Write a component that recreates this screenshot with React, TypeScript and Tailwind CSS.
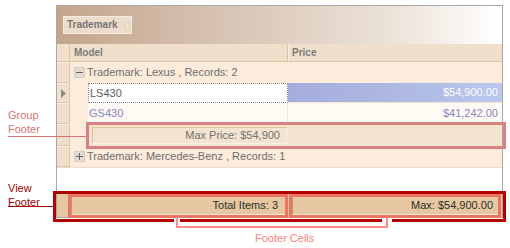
import { ReactNode } from 'react'

// indicator (row header) cell on the left of the grid
function Indicator({ children }: { children?: ReactNode }) {
  return (
    <div className="w-[13px] shrink-0 self-stretch bg-[#f0dfca] border-r border-b border-[#dfc6a6] border-t border-t-[#f8eee2] flex items-center justify-center">
      {children}
    </div>
  )
}

function ExpandBox({ sign }: { sign: '+' | '-' }) {
  return (
    <div className="w-[11px] h-[11px] bg-[#e2dbd3] border border-[#d6cdc3] flex items-center justify-center">
      <svg width="7" height="7" viewBox="0 0 7 7">
        <rect x="0" y="3" width="7" height="1" fill="#666" />
        {sign === '+' && <rect x="3" y="0" width="1" height="7" fill="#666" />}
      </svg>
    </div>
  )
}

export default function App() {
  return (
    <div className="relative w-[510px] h-[248px] bg-white overflow-hidden font-['Liberation_Sans',Arial,sans-serif] text-[11px] leading-none">
      {/* GRID */}
      <div className="ml-[56px] mt-[5px] w-[447px] border border-[#a8a8a8] flex flex-col">
        {/* group panel */}
        <div className="h-[38px] bg-[linear-gradient(90deg,#c4a58c_0%,#d9c6b6_40%,#ece2d8_75%,#ffffff_100%)] pl-[6px] pt-[10px]">
          <div className="inline-flex items-center gap-[6px] h-[18px] w-[69px] pl-[3px] bg-[#eddccb] border border-[#f5ebe0] text-[10px] font-bold text-[#767676]">
            Trademark
            <svg width="9" height="8" viewBox="0 0 9 8">
              <path d="M4.5 0.5 L8.5 7.5 L0.5 7.5 Z" fill="#f7ecd9" stroke="#e2c9a2" />
            </svg>
          </div>
        </div>

        {/* column headers */}
        <div className="h-[18px] flex bg-[#f0dfca] border-b border-[#dec4a3] text-[10px] font-bold text-[#7a7a7a]">
          <div className="w-[13px] shrink-0 border-r border-[#dec4a3]" />
          <div className="w-[218px] shrink-0 border-r border-[#dec4a3] flex items-center pl-[4px]">Model</div>
          <div className="flex-1 border-l border-[#f8efe4] flex items-center pl-[3px]">Price</div>
        </div>

        {/* group row: Lexus */}
        <div className="h-[21px] flex bg-[#fdebdc]">
          <Indicator />
          <div className="flex-1 flex items-center gap-[2px] pl-[4px] text-[#6e6e6e]">
            <ExpandBox sign="-" />
            Trademark: Lexus , Records: 2
          </div>
        </div>

        {/* data row: LS430 (focused) */}
        <div className="h-[20px] flex">
          <Indicator>
            <svg width="5" height="9" viewBox="0 0 5 9">
              <path d="M0 0 L5 4.5 L0 9 Z" fill="#8a8a8a" />
            </svg>
          </Indicator>
          <div className="w-[18px] shrink-0 bg-[#fdebdc]" />
          <div className="w-[200px] shrink-0 bg-white border border-dotted border-[#8a8a8a] flex items-center pl-[1px] text-[#5e5e5e]">
            LS430
          </div>
          <div className="flex-1 bg-[linear-gradient(90deg,#a6addc_0%,#aeb8e2_50%,#bac7ee_100%)] border-b border-[#f4e6d6] flex items-center justify-end pr-[4px] text-white">
            $54,900.00
          </div>
        </div>

        {/* data row: GS430 */}
        <div className="h-[21px] flex">
          <Indicator />
          <div className="w-[18px] shrink-0 bg-[#fdebdc]" />
          <div className="w-[200px] shrink-0 bg-[#fffaf3] border-r border-b border-[#f4e6d6] flex items-center pl-[1px] text-[#8585c2]">
            GS430
          </div>
          <div className="flex-1 bg-[#fffaf3] border-b border-[#f4e6d6] flex items-center justify-end pr-[4px] text-[#8585c2]">
            $41,242.00
          </div>
        </div>

        {/* group footer */}
        <div className="h-[22px] flex">
          <Indicator />
          <div className="w-[18px] shrink-0 bg-[#fdebdc]" />
          <div className="flex-1 bg-[#f3e3cf] flex items-center pl-[4px]">
            <div className="w-[195px] h-[17px] border-t border-l border-[#dfc4a1] border-b border-r border-b-[#faf2e8] border-r-[#faf2e8] flex items-center justify-end pr-[6px] text-[#727272]">
              Max Price: $54,900
            </div>
          </div>
        </div>

        {/* group row: Mercedes-Benz */}
        <div className="h-[22px] flex bg-[#fdebdc] border-b border-[#ecdcca]">
          <Indicator />
          <div className="flex-1 flex items-center gap-[2px] pl-[4px] text-[#6e6e6e]">
            <ExpandBox sign="+" />
            Trademark: Mercedes-Benz , Records: 1
          </div>
        </div>

        {/* empty area */}
        <div className="h-[26px] bg-white" />

        {/* view footer */}
        <div className="h-[23px] flex items-center bg-[#e5c8a1] pl-[14px] pr-[2px] gap-[5px] text-[#2e2e2e]">
          <div className="w-[216px] h-[19px] border-t border-l border-[#bf9b70] border-b border-r border-b-[#f7ead8] border-r-[#f7ead8] flex items-center justify-end pr-[8px]">
            Total Items: 3
          </div>
          <div className="flex-1 h-[19px] border-t border-l border-[#bf9b70] border-b border-r border-b-[#f7ead8] border-r-[#f7ead8] flex items-center justify-end pr-[6px]">
            Max: $54,900.00
          </div>
        </div>
      </div>

      {/* ANNOTATIONS */}
      {/* group footer */}
      <div className="absolute left-[8px] top-[108px] text-[#d97474] leading-[14px]">
        Group<br />Footer
      </div>
      <div className="absolute left-[8px] top-[136px] w-[80px] h-px bg-[#d97474]" />
      <div className="absolute left-[86px] top-[122px] w-[420px] h-[27px] border-[3px] border-[#d98080]" />

      {/* view footer */}
      <div className="absolute left-[8px] top-[181px] text-[#a30000] leading-[14px]">
        View<br />Footer
      </div>
      <div className="absolute left-[8px] top-[206px] w-[46px] h-px bg-[#a30000]" />
      <div className="absolute left-[53px] top-[191px] w-[453px] h-[28px] border-[3px] border-b-0 border-[#b00000]" />
      <div className="absolute left-[53px] top-[219px] w-[121px] h-[3px] bg-[#b00000]" />
      <div className="absolute left-[180px] top-[219px] w-[202px] h-[3px] bg-[#b00000]" />
      <div className="absolute left-[392px] top-[219px] w-[114px] h-[3px] bg-[#b00000]" />

      {/* footer cells */}
      <div className="absolute left-[68px] top-[194px] w-[220px] h-[24px] border-[3px] border-[#ee7462]" />
      <div className="absolute left-[289px] top-[194px] w-[212px] h-[24px] border-[3px] border-[#ee7462]" />
      <div className="absolute left-[176px] top-[217px] w-[2px] h-[11px] bg-[#ff8d8d]" />
      <div className="absolute left-[176px] top-[226px] w-[212px] h-[2px] bg-[#ff8d8d]" />
      <div className="absolute left-[386px] top-[217px] w-[2px] h-[11px] bg-[#ff8d8d]" />
      <div className="absolute left-[255px] top-[233px] text-[#ff8080]">Footer Cells</div>
    </div>
  )
}
